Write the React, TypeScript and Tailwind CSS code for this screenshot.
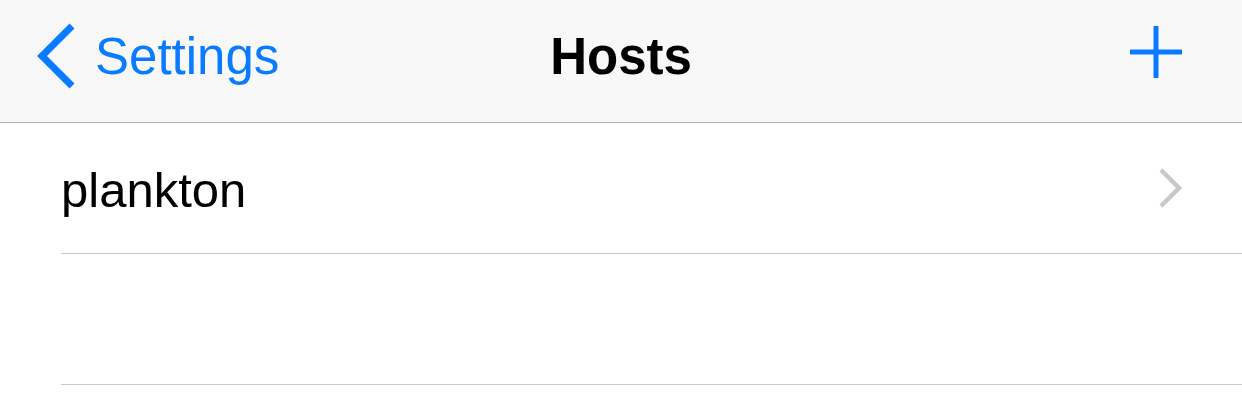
const HOSTS = ["plankton", ""];

function BackChevron() {
  return (
    <svg width="44" height="66" viewBox="0 0 44 66" className="text-[#0a7aff]">
      <path d="M38 3 L8 33 L38 63" fill="none" stroke="currentColor" strokeWidth="7" strokeLinecap="butt" />
    </svg>
  );
}

function PlusIcon() {
  return (
    <svg width="52" height="52" viewBox="0 0 52 52" className="text-[#0a7aff]">
      <path d="M26 0 V52 M0 26 H52" fill="none" stroke="currentColor" strokeWidth="5" />
    </svg>
  );
}

function RowChevron() {
  return (
    <svg width="26" height="40" viewBox="0 0 26 40" className="text-[#c7c7cc]">
      <path d="M3 2 L21 20 L3 38" fill="none" stroke="currentColor" strokeWidth="4.5" />
    </svg>
  );
}

export default function App() {
  return (
    <div className="h-[407px] w-[1242px] overflow-hidden bg-white font-['Liberation_Sans',Arial,sans-serif]">
      {/* Nav bar */}
      <header className="relative flex h-[123px] items-center border-b border-[#b2b2b2] bg-[#f8f8f8] pb-[10px]">
        <button className="flex items-center gap-[17px] pl-[34px] text-[#0a7aff]">
          <BackChevron />
          <span className="text-[51px] leading-none">Settings</span>
        </button>
        <h1 className="absolute left-1/2 top-[31px] -translate-x-1/2 text-[51px] font-bold leading-none text-black">
          Hosts
        </h1>
        <button className="ml-auto mr-[60px] -mt-[8px]">
          <PlusIcon />
        </button>
      </header>

      {/* Host list */}
      <ul className="pl-[61px]">
        {HOSTS.map((h, i) => (
          <li key={i} className="flex h-[131px] items-center border-b border-[#c8c7cc] pr-[58px]">
            <span className="mt-[4px] text-[49px] leading-none text-black">{h}</span>
            {h && (
              <span className="ml-auto">
                <RowChevron />
              </span>
            )}
          </li>
        ))}
      </ul>
    </div>
  );
}
